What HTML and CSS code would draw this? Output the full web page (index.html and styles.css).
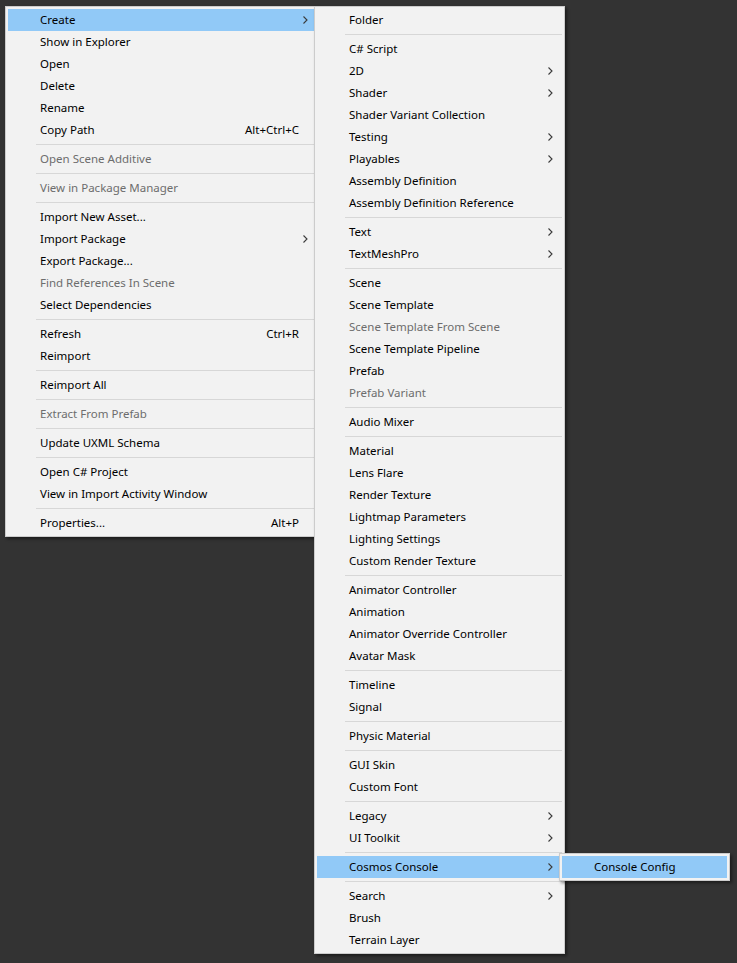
FILE: index.html
```html
<!DOCTYPE html>
<html>
<head>
<meta charset="utf-8">
<link rel="stylesheet" href="styles.css">
</head>
<body>
<div class="desk">
  <div class="menu menu-main">
    <div class="item hl"><span class="label">Create</span><span class="arrow"><svg width="5" height="8" viewBox="0 0 5 8"><polyline points="0.5,0.5 4,4 0.5,7.5"/></svg></span></div>
    <div class="item"><span class="label">Show in Explorer</span></div>
    <div class="item"><span class="label">Open</span></div>
    <div class="item"><span class="label">Delete</span></div>
    <div class="item"><span class="label">Rename</span></div>
    <div class="item"><span class="label">Copy Path</span><span class="key">Alt+Ctrl+C</span></div>
    <div class="sep"></div>
    <div class="item off"><span class="label">Open Scene Additive</span></div>
    <div class="sep"></div>
    <div class="item off"><span class="label">View in Package Manager</span></div>
    <div class="sep"></div>
    <div class="item"><span class="label">Import New Asset...</span></div>
    <div class="item"><span class="label">Import Package</span><span class="arrow"><svg width="5" height="8" viewBox="0 0 5 8"><polyline points="0.5,0.5 4,4 0.5,7.5"/></svg></span></div>
    <div class="item"><span class="label">Export Package...</span></div>
    <div class="item off"><span class="label">Find References In Scene</span></div>
    <div class="item"><span class="label">Select Dependencies</span></div>
    <div class="sep"></div>
    <div class="item"><span class="label">Refresh</span><span class="key">Ctrl+R</span></div>
    <div class="item"><span class="label">Reimport</span></div>
    <div class="sep"></div>
    <div class="item"><span class="label">Reimport All</span></div>
    <div class="sep"></div>
    <div class="item off"><span class="label">Extract From Prefab</span></div>
    <div class="sep"></div>
    <div class="item"><span class="label">Update UXML Schema</span></div>
    <div class="sep"></div>
    <div class="item"><span class="label">Open C# Project</span></div>
    <div class="item"><span class="label">View in Import Activity Window</span></div>
    <div class="sep"></div>
    <div class="item"><span class="label">Properties...</span><span class="key">Alt+P</span></div>
  </div>

  <div class="menu menu-create">
    <div class="item"><span class="label">Folder</span></div>
    <div class="sep"></div>
    <div class="item"><span class="label">C# Script</span></div>
    <div class="item"><span class="label">2D</span><span class="arrow"><svg width="5" height="8" viewBox="0 0 5 8"><polyline points="0.5,0.5 4,4 0.5,7.5"/></svg></span></div>
    <div class="item"><span class="label">Shader</span><span class="arrow"><svg width="5" height="8" viewBox="0 0 5 8"><polyline points="0.5,0.5 4,4 0.5,7.5"/></svg></span></div>
    <div class="item"><span class="label">Shader Variant Collection</span></div>
    <div class="item"><span class="label">Testing</span><span class="arrow"><svg width="5" height="8" viewBox="0 0 5 8"><polyline points="0.5,0.5 4,4 0.5,7.5"/></svg></span></div>
    <div class="item"><span class="label">Playables</span><span class="arrow"><svg width="5" height="8" viewBox="0 0 5 8"><polyline points="0.5,0.5 4,4 0.5,7.5"/></svg></span></div>
    <div class="item"><span class="label">Assembly Definition</span></div>
    <div class="item"><span class="label">Assembly Definition Reference</span></div>
    <div class="sep"></div>
    <div class="item"><span class="label">Text</span><span class="arrow"><svg width="5" height="8" viewBox="0 0 5 8"><polyline points="0.5,0.5 4,4 0.5,7.5"/></svg></span></div>
    <div class="item"><span class="label">TextMeshPro</span><span class="arrow"><svg width="5" height="8" viewBox="0 0 5 8"><polyline points="0.5,0.5 4,4 0.5,7.5"/></svg></span></div>
    <div class="sep"></div>
    <div class="item"><span class="label">Scene</span></div>
    <div class="item"><span class="label">Scene Template</span></div>
    <div class="item off"><span class="label">Scene Template From Scene</span></div>
    <div class="item"><span class="label">Scene Template Pipeline</span></div>
    <div class="item"><span class="label">Prefab</span></div>
    <div class="item off"><span class="label">Prefab Variant</span></div>
    <div class="sep"></div>
    <div class="item"><span class="label">Audio Mixer</span></div>
    <div class="sep"></div>
    <div class="item"><span class="label">Material</span></div>
    <div class="item"><span class="label">Lens Flare</span></div>
    <div class="item"><span class="label">Render Texture</span></div>
    <div class="item"><span class="label">Lightmap Parameters</span></div>
    <div class="item"><span class="label">Lighting Settings</span></div>
    <div class="item"><span class="label">Custom Render Texture</span></div>
    <div class="sep"></div>
    <div class="item"><span class="label">Animator Controller</span></div>
    <div class="item"><span class="label">Animation</span></div>
    <div class="item"><span class="label">Animator Override Controller</span></div>
    <div class="item"><span class="label">Avatar Mask</span></div>
    <div class="sep"></div>
    <div class="item"><span class="label">Timeline</span></div>
    <div class="item"><span class="label">Signal</span></div>
    <div class="sep"></div>
    <div class="item"><span class="label">Physic Material</span></div>
    <div class="sep"></div>
    <div class="item"><span class="label">GUI Skin</span></div>
    <div class="item"><span class="label">Custom Font</span></div>
    <div class="sep"></div>
    <div class="item"><span class="label">Legacy</span><span class="arrow"><svg width="5" height="8" viewBox="0 0 5 8"><polyline points="0.5,0.5 4,4 0.5,7.5"/></svg></span></div>
    <div class="item"><span class="label">UI Toolkit</span><span class="arrow"><svg width="5" height="8" viewBox="0 0 5 8"><polyline points="0.5,0.5 4,4 0.5,7.5"/></svg></span></div>
    <div class="sep"></div>
    <div class="item hl"><span class="label">Cosmos Console</span><span class="arrow"><svg width="5" height="8" viewBox="0 0 5 8"><polyline points="0.5,0.5 4,4 0.5,7.5"/></svg></span></div>
    <div class="sep"></div>
    <div class="item"><span class="label">Search</span><span class="arrow"><svg width="5" height="8" viewBox="0 0 5 8"><polyline points="0.5,0.5 4,4 0.5,7.5"/></svg></span></div>
    <div class="item"><span class="label">Brush</span></div>
    <div class="item"><span class="label">Terrain Layer</span></div>
  </div>

  <div class="menu menu-cosmos">
    <div class="item hl"><span class="label">Console Config</span></div>
  </div>
</div>
</body>
</html>
```
FILE: styles.css
```css
html, body {
  margin: 0;
  padding: 0;
  background: #333333;
}

.desk {
  position: relative;
  width: 737px;
  height: 963px;
  overflow: hidden;
  font-family: "Noto Sans", "Open Sans", sans-serif;
  font-size: 11.5px;
  color: #000;
}

.menu {
  position: absolute;
  box-sizing: border-box;
  background: #f2f2f2;
  border: 1px solid #cccccc;
  padding: 2px;
  box-shadow: 2px 2px 3px rgba(0, 0, 0, 0.45);
}

.menu-main {
  left: 5px;
  top: 6px;
  width: 315px;
  z-index: 1;
}

.menu-create {
  left: 314px;
  top: 6px;
  width: 251px;
  z-index: 2;
}

.menu-cosmos {
  left: 559px;
  top: 853px;
  width: 171px;
  z-index: 3;
}

.item {
  display: flex;
  align-items: center;
  box-sizing: border-box;
  height: 22px;
  padding-left: 32px;
  padding-bottom: 1px;
  white-space: nowrap;
}

.item.hl {
  background: #91c9f7;
}

.item.off {
  color: #6d6d6d;
}

.label {
  flex: 1;
}

.key {
  margin-right: 18px;
}

.arrow {
  width: 14px;
  display: flex;
  align-items: center;
}

.arrow svg {
  display: block;
  fill: none;
  stroke: #3a3a3a;
  stroke-width: 1.1;
}

.sep {
  height: 7px;
  display: flex;
  align-items: center;
  margin-left: 28px;
}

.sep::before {
  content: "";
  flex: 1;
  height: 1px;
  background: #d7d7d7;
}
```
